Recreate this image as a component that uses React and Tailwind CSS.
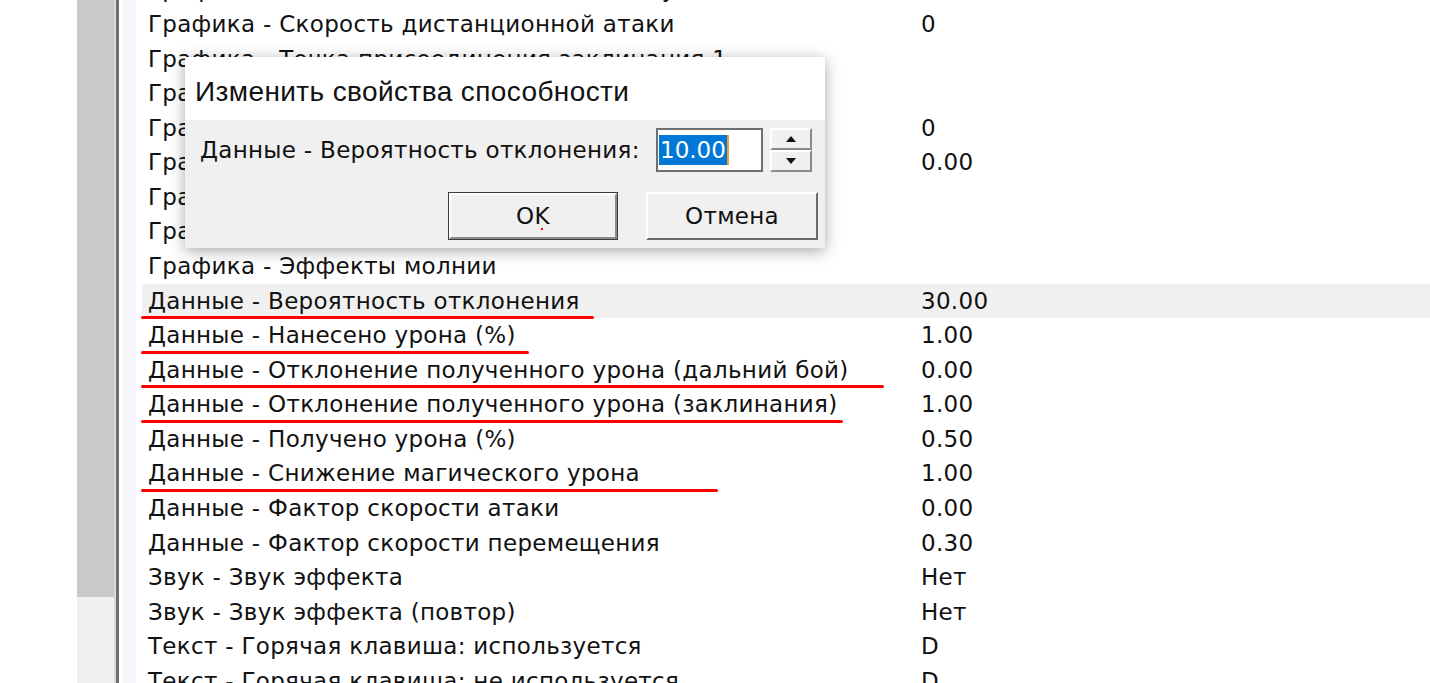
import React from 'react';

const rows = [
  { label: 'Графика - Положение кнопки не используется (Y)', value: '0' },
  { label: 'Графика - Скорость дистанционной атаки', value: '0' },
  { label: 'Графика - Точка присоединения заклинания 1', value: '' },
  { label: 'Графика - Точка присоединения заклинания 2', value: '' },
  { label: 'Графика - Число точек присоединения', value: '0' },
  { label: 'Графика - Высота снаряда', value: '0.00' },
  { label: 'Графика - Цель', value: '' },
  { label: 'Графика - Эффект', value: '' },
  { label: 'Графика - Эффекты молнии', value: '' },
  { label: 'Данные - Вероятность отклонения', value: '30.00', selected: true, mark: 453 },
  { label: 'Данные - Нанесено урона (%)', value: '1.00', mark: 388 },
  { label: 'Данные - Отклонение полученного урона (дальний бой)', value: '0.00', mark: 743 },
  { label: 'Данные - Отклонение полученного урона (заклинания)', value: '1.00', mark: 702 },
  { label: 'Данные - Получено урона (%)', value: '0.50' },
  { label: 'Данные - Снижение магического урона', value: '1.00', mark: 577 },
  { label: 'Данные - Фактор скорости атаки', value: '0.00' },
  { label: 'Данные - Фактор скорости перемещения', value: '0.30' },
  { label: 'Звук - Звук эффекта', value: 'Нет' },
  { label: 'Звук - Звук эффекта (повтор)', value: 'Нет' },
  { label: 'Текст - Горячая клавиша: используется', value: 'D' },
  { label: 'Текст - Горячая клавиша: не используется', value: 'D' },
];

const listFont = { fontFamily: '"DejaVu Sans", Verdana, sans-serif' };

const Row = ({ row }) => (
  <div className={`relative flex items-center h-[34.58px] shrink-0 ${row.selected ? 'bg-[#f0f0f0]' : ''}`}>
    <div className="w-[779px] pl-[6px] whitespace-nowrap">{row.label}</div>
    <div className="whitespace-nowrap">{row.value}</div>
    {row.mark && (
      // красная пометка поверх списка
      <div className="absolute left-[-1px] bottom-[-1px] h-[3px] rounded-full bg-[#ff0000]" style={{ width: row.mark }} />
    )}
  </div>
);

const SpinButton = ({ up }) => (
  <div className="flex-1 flex items-center justify-center bg-[#f0f0f0] border-2 border-t-white border-l-white border-r-[#8a8a8a] border-b-[#8a8a8a]">
    <svg width="10" height="6" viewBox="0 0 10 6">
      {up ? <path d="M5 0 L10 6 L0 6 Z" fill="#111" /> : <path d="M0 0 L10 0 L5 6 Z" fill="#111" />}
    </svg>
  </div>
);

const Dialog = () => (
  <div className="absolute left-[185px] top-[57px] w-[640px] h-[191px] flex flex-col bg-[#f0f0f0] shadow-[0_3px_14px_rgba(0,0,0,0.35)]">
    <div className="h-[63px] bg-white flex items-center pl-[10px] pt-[6px] text-[28px] tracking-[0.4px] text-[#111]" style={{ fontFamily: '"Liberation Sans", Arial, sans-serif' }}>
      Изменить свойства способности
    </div>
    <div className="flex-1 flex flex-col pt-[8px] pb-[8px] tracking-[0.3px]" style={listFont}>
      <div className="flex items-center h-[44px] pr-[13px]">
        <div className="flex-1 pl-[15px] text-[23px] text-[#111] whitespace-nowrap">Данные - Вероятность отклонения:</div>
        <div className="w-[107px] h-[44px] bg-white border-2 border-[#6f6f6f] flex items-center pl-[1px] tracking-normal">
          <span className="bg-[#0078d7] text-white text-[23px] leading-[30px] px-[1px]">10.00</span>
          <span className="w-[2px] h-[30px] bg-[#f39a2b]" />
        </div>
        <div className="w-[42px] h-[44px] ml-[7px] flex flex-col">
          <SpinButton up />
          <SpinButton />
        </div>
      </div>
      <div className="flex justify-end gap-[28px] mt-[20px] pr-[7px]">
        <button className="relative w-[170px] h-[48px] bg-[#f0f0f0] border border-[#3c3c3c] text-[23px] text-[#111]">
          <div className="absolute inset-0 border-2 border-t-white border-l-white border-r-[#8a8a8a] border-b-[#8a8a8a]" />
          <span className="relative">OK</span>
          <span className="absolute left-[92px] top-[35px] w-[2px] h-[2px] bg-[#ff0000]" />
        </button>
        <button className="w-[172px] h-[48px] bg-[#f0f0f0] border-2 border-t-white border-l-white border-r-[#6a6a6a] border-b-[#6a6a6a] text-[23px] text-[#111]">
          Отмена
        </button>
      </div>
    </div>
  </div>
);

export default function App() {
  return (
    <div className="relative w-[1430px] h-[683px] overflow-hidden bg-white flex">
      <div className="w-[77px] shrink-0 bg-white" />
      <div className="w-[37px] shrink-0 flex flex-col">
        <div className="h-[597px] bg-[#c9c9c9]" />
        <div className="flex-1 bg-[#f0f0f0]" />
      </div>
      <div className="w-[2px] shrink-0 bg-[#dadada]" />
      <div className="w-[3px] shrink-0 bg-[#6e6e6e]" />
      <div className="w-[3px] shrink-0 bg-white" />
      <div className="w-[14px] shrink-0 bg-[#f3f7fc]" />
      <div className="w-[6px] shrink-0 bg-white" />
      <div className="flex-1 flex flex-col -mt-[27.7px] text-[23px] tracking-[0.3px] text-[#111]" style={listFont}>
        {rows.map((row, i) => (
          <Row key={i} row={row} />
        ))}
      </div>
      <Dialog />
    </div>
  );
}
